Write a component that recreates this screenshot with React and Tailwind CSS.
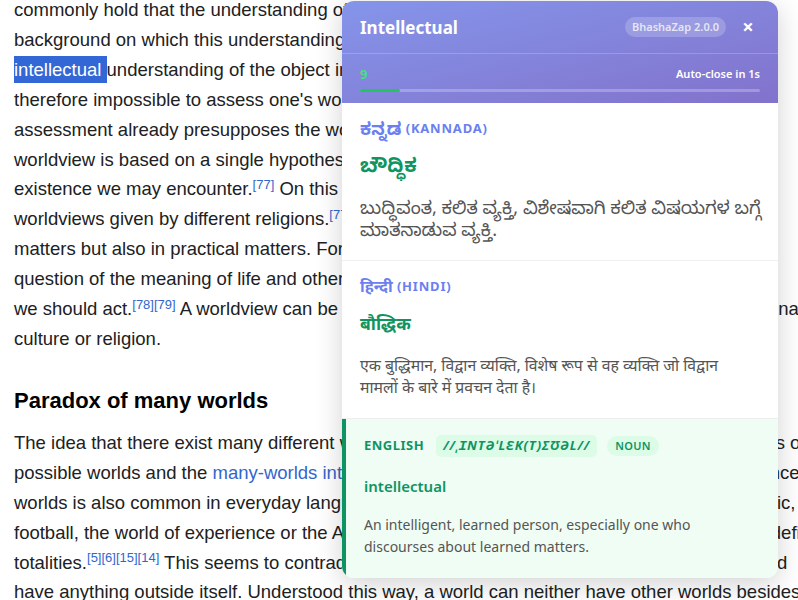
const Sup = ({ children }) => (
  <sup className="text-[13px] text-[#3366cc]">{children}</sup>
);

function Article() {
  return (
    <div className="-mt-[5px] pl-[14px] font-['Liberation_Sans',Arial,sans-serif] text-[18.5px] leading-[29.9px] text-[#202122] whitespace-nowrap">
      <div>
        <div>commonly hold that the understanding of any object depends on a worldview constituting the</div>
        <div>background on which this understanding can take place. This may affect not just our</div>
        <div>
          <span className="inline-block leading-[27px] bg-[#3367d6] text-white">intellectual&nbsp;</span>understanding of the object in question but the experience of it in general. It is
        </div>
        <div>therefore impossible to assess one's worldview from a neutral perspective since this</div>
        <div>assessment already presupposes the worldview as its background. Some hold that each</div>
        <div>worldview is based on a single hypothesis that promises to solve all the problems of our</div>
        <div>existence we may encounter.<Sup>[77]</Sup> On this interpretation, the term is closely associated to the</div>
        <div>worldviews given by different religions.<Sup>[77]</Sup> Worldviews offer orientation not just in theoretical</div>
        <div>matters but also in practical matters. For this reason, they usually include answers to the</div>
        <div>question of the meaning of life and other evaluative components about what matters and</div>
        <div>we should act.<Sup>[78][79]</Sup> A worldview can be unique to one individual or shared by the people of a nation</div>
        <div>culture or religion.</div>
      </div>
      <h3 className="mt-[32px] text-[22px] leading-[30px] font-bold text-[#000]">Paradox of many worlds</h3>
      <div className="mt-[12px]">
        <div>The idea that there exist many different worlds is found in various fields. For example, theories of</div>
        <div>possible worlds and the <span className="text-[#3366cc]">many-worlds interpretation</span> of quantum mechanics carries this reference</div>
        <div>worlds is also common in everyday language, for example, with reference to the world of music,</div>
        <div>football, the world of experience or the Asian world. But at the same time, worlds are usually defined</div>
        <div>totalities.<Sup>[5][6][15][14]</Sup> This seems to contradict the very idea of a plurality of worlds since if a world</div>
        <div>have anything outside itself. Understood this way, a world can neither have other worlds besides</div>
      </div>
    </div>
  );
}

const IND = "font-['Noto_Sans','Noto_Sans_Kannada','Noto_Sans_Devanagari','Lohit_Kannada','Lohit_Devanagari',sans-serif]";

function LangSection({ label, word, desc, wordSize, descSize, last }) {
  return (
    <div className={`px-[18px] pt-[16px] pb-[20px] ${last ? "" : "border-b border-[#eeeeee]"}`}>
      <div className="h-[18px] flex items-center text-[13px] leading-[18px] font-bold text-[#6b7ff0] tracking-[0.8px] whitespace-nowrap">{label}</div>
      <div className={`mt-[14px] h-[28px] flex items-center ${wordSize} leading-[28px] font-bold text-[#11945f]`}>{word}</div>
      <div className={`mt-[17px] ${descSize} leading-[22px] text-[#555555] whitespace-nowrap`}>{desc}</div>
    </div>
  );
}

function Popup() {
  return (
    <div className={`absolute left-[342px] top-[1px] w-[436px] h-[577px] rounded-[12px] overflow-hidden bg-white shadow-[0_6px_28px_rgba(0,0,0,0.18)] ${IND}`}>
      <div className="bg-gradient-to-br from-[#8495ea] to-[#8272cc] text-white">
        <div className="flex items-center justify-between pl-[18px] pr-[18px] h-[53px] border-b border-white/20">
          <div className="text-[17px] font-bold leading-[24px] pt-[2px]">Intellectual</div>
          <div className="flex items-center gap-[10px]">
            <span className="flex items-center h-[20px] px-[7px] rounded-full bg-white/20 text-[11px] font-semibold text-white/75">BhashaZap 2.0.0</span>
            <span className="flex items-center justify-center w-[24px] h-[24px] text-[20px] font-bold leading-none">×</span>
          </div>
        </div>
        <div className="px-[18px] pt-[12px] pb-[11px]">
          <div className="flex justify-between items-center text-[11px] leading-[16px] font-semibold">
            <span className="text-[#4ade80] text-[13px] font-bold">9</span>
            <span>Auto-close in 1s</span>
          </div>
          <div className="mt-[7px] h-[3px] rounded-full bg-white/25">
            <div className="h-full w-[10%] rounded-full bg-[#22c55e]"></div>
          </div>
        </div>
      </div>
      <LangSection
        label={<><span className="text-[17.5px] tracking-normal">ಕನ್ನಡ</span>&nbsp;(KANNADA)</>}
        word="ಬೌದ್ಧಿಕ"
        wordSize="text-[19.5px]"
        descSize="text-[18.2px]"
        desc={<>ಬುದ್ಧಿವಂತ, ಕಲಿತ ವ್ಯಕ್ತಿ, ವಿಶೇಷವಾಗಿ ಕಲಿತ ವಿಷಯಗಳ ಬಗ್ಗೆ<br />ಮಾತನಾಡುವ ವ್ಯಕ್ತಿ.</>}
      />
      <LangSection
        label={<><span className="text-[16px] tracking-normal">हिन्दी</span>&nbsp;(HINDI)</>}
        word="बौद्धिक"
        wordSize="text-[17.5px]"
        descSize="text-[15.8px]"
        desc={<>एक बुद्धिमान, विद्वान व्यक्ति, विशेष रूप से वह व्यक्ति जो विद्वान<br />मामलों के बारे में प्रवचन देता है।</>}
      />
      <div className="border-l-[4px] border-[#0e9463] bg-[#f0fdf4] pl-[18px] pr-[18px] pt-[16px] pb-[21px] h-[160px]">
        <div className="flex items-center h-[22px] whitespace-nowrap">
          <span className="text-[13px] font-bold text-[#0e9463] tracking-[0.5px]">ENGLISH</span>
          <span className="ml-[12px] flex items-center h-[22px] px-[7px] rounded-[5px] bg-[#dcfce7] text-[13px] font-bold italic uppercase tracking-[0.9px] text-[#0e9463]">//ˌɪntəˈlɛk(t)ʃʊəl//</span>
          <span className="ml-[10px] flex items-center h-[20px] px-[8px] rounded-full bg-[#dcfce7] text-[11px] font-semibold text-[#0e9463] tracking-[0.3px]">NOUN</span>
        </div>
        <div className="mt-[17px] text-[15px] leading-[24px] font-semibold text-[#0e9463]">intellectual</div>
        <div className="mt-[16px] text-[14px] leading-[22px] text-[#555555]">
          An intelligent, learned person, especially one who<br />discourses about learned matters.
        </div>
      </div>
    </div>
  );
}

export default function App() {
  return (
    <div className="relative w-[798px] h-[600px] overflow-hidden bg-white">
      <Article />
      <Popup />
    </div>
  );
}
